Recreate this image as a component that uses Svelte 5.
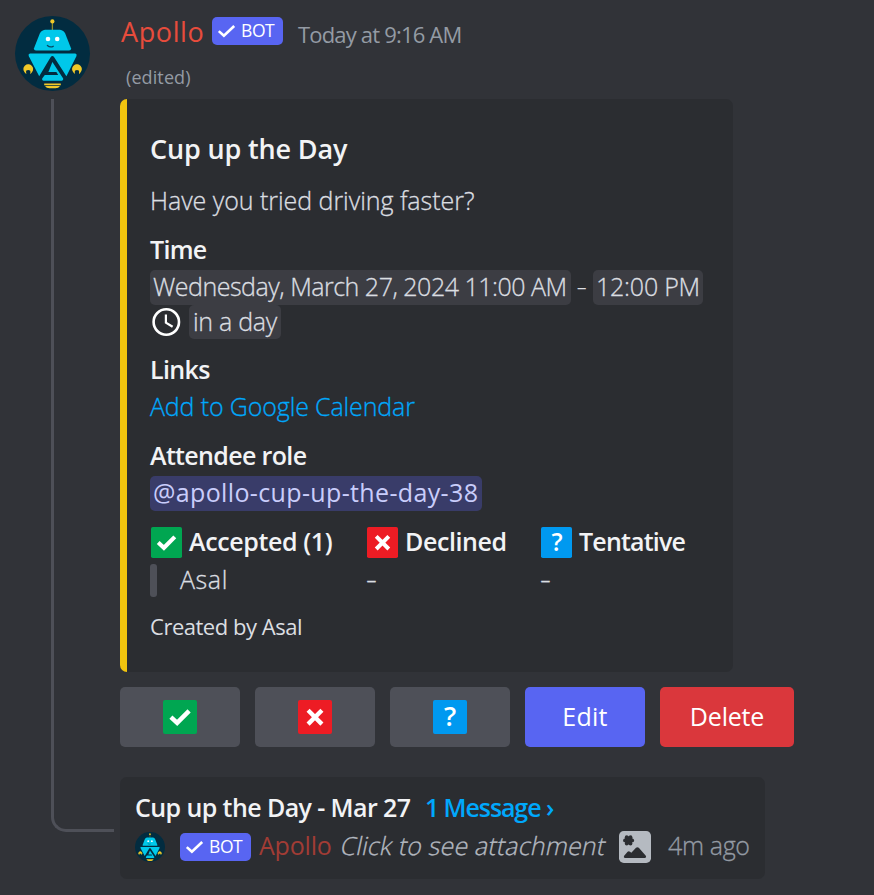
<script>
  const attendance = [
    { kind: 'yes', label: 'Accepted (1)', name: 'Asal', width: 216, spacing: -0.38 },
    { kind: 'no', label: 'Declined', name: '', width: 174, spacing: -0.42 },
    { kind: 'maybe', label: 'Tentative', name: '', width: 160, spacing: -0.82 }
  ];
</script>

{#snippet emoji(kind, size)}
  <svg class="emoji" width={size} height={size} viewBox="0 0 31 31">
    <rect width="31" height="31" rx="1.8" fill={kind === 'yes' ? '#00a651' : kind === 'no' ? '#ed1c24' : '#0099f0'} />
    {#if kind === 'yes'}
      <path d="M7.2 15.6 12.9 20.8 23.8 9.9" fill="none" stroke="#fff" stroke-width="4.1" />
    {:else if kind === 'no'}
      <path d="M9.2 9.4 21.8 22M21.8 9.4 9.2 22" fill="none" stroke="#fff" stroke-width="4" />
    {:else}
      <text x="15.6" y="24" text-anchor="middle" font-family="Open Sans, sans-serif" font-size="24.5" font-weight="600" fill="#fff">?</text>
    {/if}
  </svg>
{/snippet}

{#snippet robot(size)}
  <svg class="robot" width={size} height={size} viewBox="0 0 75 75">
    <circle cx="37.5" cy="37.5" r="37.5" fill="#022c40" />
    <path d="M37.4 6V14" stroke="#8d8b2c" stroke-width="1.3" />
    <circle cx="37.4" cy="5.4" r="2.1" fill="#f0c929" />
    <path d="M30 13.8H45Q48.6 14.2 50.2 17.6L56 32.2Q56.4 34.3 54 34.6H21Q18.6 34.3 19 32.2L24.8 17.6Q26.4 14.2 30 13.8Z" fill="#00c8ea" />
    <circle cx="33" cy="23" r="2.3" fill="#fff" />
    <circle cx="42.2" cy="23" r="2.3" fill="#fff" />
    <path d="M32.4 29.4Q35 31.8 38.2 30.3" fill="none" stroke="#064761" stroke-width="1.3" stroke-linecap="round" />
    <path d="M15 37.6H60.2Q62.2 37.9 61.5 40L51.4 60.2 39.2 41.2Q37.4 39 35.6 41.2L24.2 60.2 13.7 40Q13 37.9 15 37.6Z" fill="#00c8ea" />
    <path d="M37.4 46 48.2 62.4Q48.6 64.4 46.8 64.7H28.4Q26.6 64.4 27.2 62.4L29.8 59H43.2L41.4 56H33.4Z" fill="#00c8ea" />
    <path d="M10.3 56A4.1 4.1 0 1 1 16.2 56Q16.4 53.2 13.2 53.2T10.3 56ZM59 56A4.1 4.1 0 1 1 64.9 56Q65.1 53.2 62 53.2T59 56Z" fill="#f0c929" stroke="#f0c929" stroke-width="1.6" />
    <path d="M29.2 67.4H45.8V69.2H29.2ZM30 70H45Q43.6 72.2 40.5 72.2H34.5Q31.4 72.2 30 70Z" fill="#f0c929" />
  </svg>
{/snippet}

{#snippet botBadge()}
  <span class="badge">
    <svg width="17" height="14" viewBox="0 0 17 14"><path d="M.8 7.1 5.9 11.8 16.2 2" fill="none" stroke="#fff" stroke-width="2.6" /></svg>
    <span>BOT</span>
  </span>
{/snippet}

<main>
  <aside>
    {@render robot(75)}
    <div class="spine"></div>
  </aside>

  <section>
    <header>
      <span class="author">Apollo</span>
      {@render botBadge()}
      <time>Today at 9:16 AM</time>
    </header>
    <div class="edited">(edited)</div>

    <article class="embed">
      <h1>Cup up the Day</h1>
      <p class="desc">Have you tried driving faster?</p>

      <h2 class="time">Time</h2>
      <div class="line">
        <span class="chip date">Wednesday, March 27, 2024 11:00 AM</span>
        <span class="between"><span class="dash">-</span></span>
        <span class="chip until">12:00 PM</span>
      </div>
      <div class="line second">
        <svg width="30" height="30" viewBox="0 0 30 30" fill="none" stroke="#fff" stroke-width="2.6">
          <circle cx="15.3" cy="15" r="12.7" /><path d="M14.9 7.6V15.6L21.6 19.8" stroke-width="2.2" />
        </svg>
        <span class="chip relative">in a day</span>
      </div>

      <h2 class="links">Links</h2>
      <div><a href="#calendar">Add to Google Calendar</a></div>

      <h2 class="role-title">Attendee role</h2>
      <div class="line"><span class="chip role">@apollo-cup-up-the-day-38</span></div>

      <div class="attendance">
        {#each attendance as col}
          <div style="width:{col.width}px">
            <h2 style="letter-spacing:{col.spacing}px">{@render emoji(col.kind, 31)}{col.label}</h2>
            {#if col.name}
              <div class="quote"><i></i>{col.name}</div>
            {:else}
              <div class="quote"><span class="dash">-</span></div>
            {/if}
          </div>
        {/each}
      </div>
      <footer>Created by Asal</footer>
    </article>

    <div class="actions">
      <button>{@render emoji('yes', 34)}</button>
      <button>{@render emoji('no', 34)}</button>
      <button>{@render emoji('maybe', 34)}</button>
      <button class="edit">Edit</button>
      <button class="delete">Delete</button>
    </div>

    <div class="thread">
      <div class="thread-title">
        <strong>Cup up the Day - Mar 27</strong>
        <span class="count">1 Message</span><span class="arrow">›</span>
      </div>
      <div class="preview">
        {@render robot(30)}
        {@render botBadge()}
        <span class="who">Apollo</span>
        <span class="hint">Click to see attachment</span>
        <svg class="picture" width="32" height="32" viewBox="0 0 32 32">
          <rect width="32" height="32" rx="4.8" fill="#b5bac1" />
          <g fill="#2b2d31">
            <circle cx="9.6" cy="9.4" r="4.2" /><circle cx="7.7" cy="6.2" r="1.9" /><circle cx="11.5" cy="6.2" r="1.9" /><circle cx="13.2" cy="9.4" r="1.9" /><circle cx="11.5" cy="12.6" r="1.9" /><circle cx="7.7" cy="12.6" r="1.9" /><circle cx="6" cy="9.4" r="1.9" />
            <path d="M5.8 27Q4.3 26.6 5 25L8.6 20.8Q9.8 19.8 11 20.8L12.3 21.8 17 16.8Q18.4 15.6 19.8 16.8L27 25Q27.6 26.6 26 27Z" />
          </g>
        </svg>
        <span class="ago">4m ago</span>
      </div>
    </div>
  </section>
</main>

<style>
  :global(body) { background: #313338; }
  main {
    display: grid;
    grid-template-columns: 120px 1fr;
    height: 895px;
    box-sizing: border-box;
    overflow: hidden;
    background: #313338;
    color: #dbdee1;
    font: 300 25px/34px "Open Sans", sans-serif;
    white-space: nowrap;
  }
  svg { display: block; flex: none; overflow: visible; }
  h1, h2, p { margin: 0; }
  .desc, .date, .until, .relative, a, .quote, .hint, .ago { -webkit-text-stroke: .3px currentColor; }
  aside { display: flex; flex-direction: column; padding: 16px 0 63px 15px; }
  .spine {
    flex: 1;
    margin: 8px 6px 0 36px;
    border: solid #4e5058;
    border-width: 0 0 3px 3px;
    border-bottom-left-radius: 15px;
  }
  header { display: flex; height: 49px; padding-top: 14px; }
  .author { width: 91px; padding: 1px 0 0 1px; font-size: 27px; font-weight: 400; letter-spacing: .6px; color: #e74c3c; }
  .badge {
    display: flex;
    align-items: center;
    box-sizing: border-box;
    flex: none;
    width: 71px;
    height: 28px;
    padding-left: 6px;
    gap: 6px;
    border-radius: 5px;
    background: #5865f2;
    color: #fff;
    font-size: 17.5px;
    line-height: 26px;
    letter-spacing: -.4px;
    font-weight: 400;
  }
  .badge span { height: 28px; }
  header .badge { margin-top: 3px; }
  time { margin: 4px 0 0 15px; font-size: 22px; line-height: 32px; font-weight: 400; letter-spacing: -.82px; color: #949ba4; }
  .edited { height: 36px; padding-left: 6px; font-size: 18px; line-height: 29px; font-weight: 400; letter-spacing: .1px; color: #949ba4; }

  .embed {
    box-sizing: border-box;
    width: 613px;
    height: 573px;
    padding: 32px 0 0 23px;
    border-left: 7px solid #f1c40f;
    border-radius: 7px;
    background: #2b2d31;
  }
  h1 { height: 36px; font-size: 27px; line-height: 36px; font-weight: 600; letter-spacing: -.15px; color: #f2f3f5; }
  h2 { font-size: 25px; line-height: 35px; font-weight: 600; color: #f2f3f5; }
  .desc { margin-top: 16px; line-height: 35px; height: 34px; letter-spacing: -.04px; }
  .time { margin-top: 15px; height: 38px; letter-spacing: -.7px; }
  .line { display: flex; }
  .chip { box-sizing: border-box; height: 35px; padding-left: 3px; line-height: 33px; border-radius: 5px; background: #3c3d43; }
  .date { width: 421px; letter-spacing: -.49px; }
  .between { width: 22px; text-align: center; line-height: 32px; }
  .dash { display: inline-block; transform: scaleX(1.35); transform-origin: 0 50%; }
  .between .dash { transform-origin: 60% 50%; }
  .until { width: 110px; letter-spacing: -.22px; }
  .second { gap: 8px; padding-left: 1px; }
  .second svg { margin-top: 2px; }
  .relative { width: 92px; height: 34px; padding-left: 4px; line-height: 32px; letter-spacing: -.3px; }
  .links { margin-top: 13px; height: 37px; letter-spacing: -.65px; }
  a { color: #00a8fc; text-decoration: none; letter-spacing: -.14px; }
  .role-title { margin-top: 15px; height: 38px; letter-spacing: -.65px; }
  .role { width: 332px; background: #393c69; color: #c9cdfb; font-weight: 400; letter-spacing: .36px; }
  .attendance { display: flex; margin-top: 13px; }
  .attendance h2 { display: flex; gap: 7px; height: 38px; }
  .attendance .emoji { margin: 3px 0 0 1px; }
  .quote { display: flex; line-height: 35px; letter-spacing: .6px; height: 35px; }
  .quote i { width: 7px; height: 33px; margin: 2px 23px 0 0; border-radius: 3px; background: #4e5058; }
  footer { margin-top: 12px; font-size: 22px; line-height: 34px; font-weight: 400; letter-spacing: -.48px; }

  .actions { display: flex; gap: 15px; margin-top: 15px; }
  button {
    display: flex;
    align-items: center;
    justify-content: center;
    box-sizing: border-box;
    width: 120px;
    height: 60px;
    padding: 0;
    border: 0;
    border-radius: 5px;
    background: #4e5058;
    color: #fff;
    font: 400 25px/34px "Open Sans", sans-serif;
  }
  .edit { background: #5865f2; padding-bottom: 3px; letter-spacing: .3px; }
  .delete { width: 134px; background: #da373c; padding-bottom: 3px; letter-spacing: -.2px; }

  .thread { box-sizing: border-box; width: 645px; height: 102px; margin-top: 30px; padding: 13px 0 0 15px; border-radius: 7px; background: #2b2d31; }
  .thread-title { display: flex; height: 38px; line-height: 35px; color: #f2f3f5; font-weight: 600; }
  strong { width: 290px; font-weight: 600; letter-spacing: -.59px; }
  .count { width: 121px; color: #00a8fc; letter-spacing: -1.1px; }
  .arrow { color: #00a8fc; }
  .preview { display: flex; height: 38px; line-height: 35px; }
  .preview .robot { margin: 4px 15px 0 0; }
  .preview .badge { margin: 5px 8px 0 0; }
  .who { width: 82px; font-weight: 400; letter-spacing: -.2px; color: #a23c35; }
  .hint { width: 278px; letter-spacing: .15px; color: #b5bac1; transform: skewX(-12deg); }
  .picture { margin-top: 3px; }
  .ago { margin-left: 17px; letter-spacing: -.35px; color: #949ba4; }
</style>
